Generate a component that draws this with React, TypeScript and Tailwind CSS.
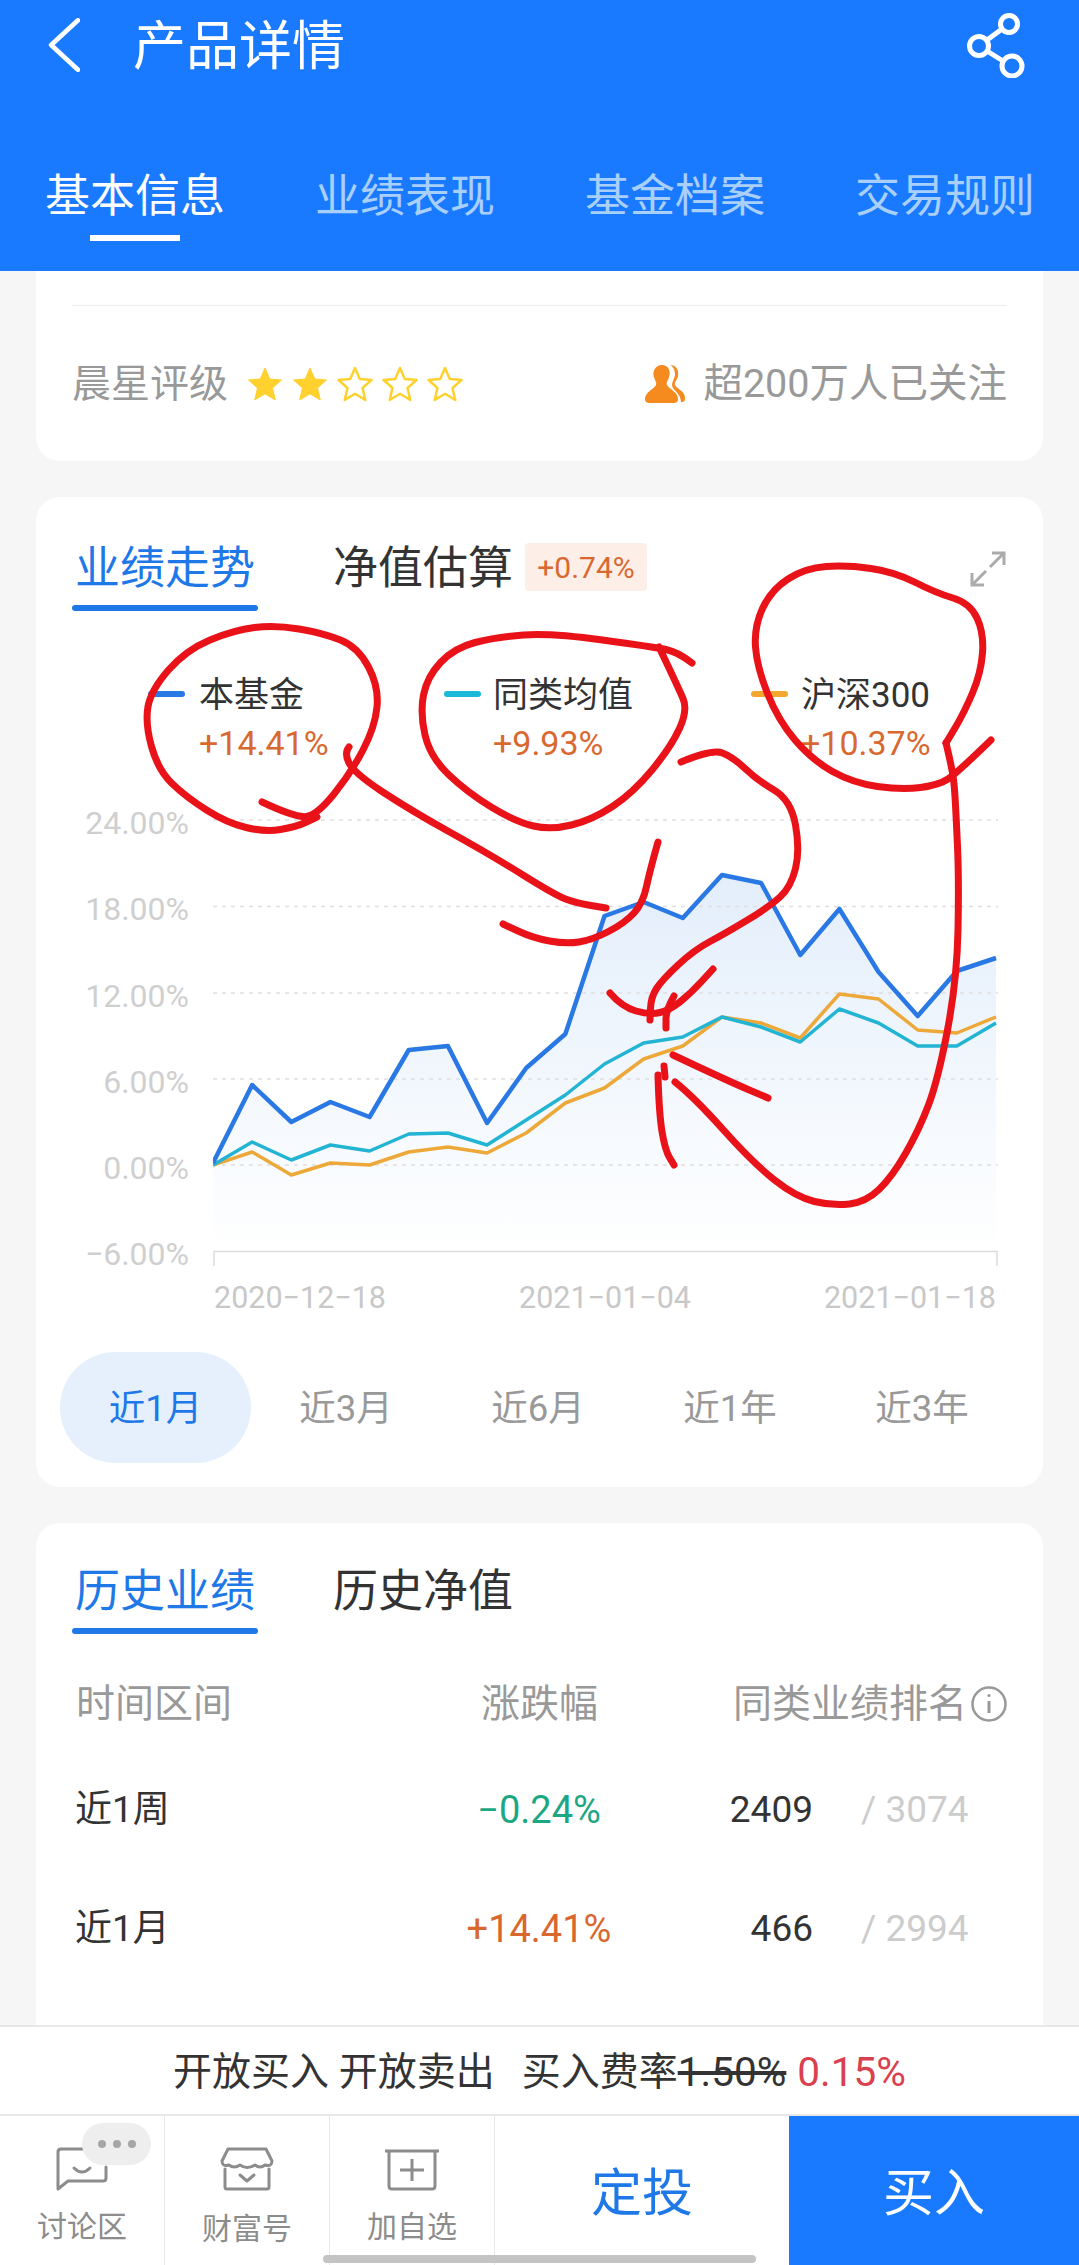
const GRID_Y = [820, 906.5, 993, 1079, 1165]
const STEP = 39.15
const toPoints = (ys: number[]) => ys.map((y, i) => `${213 + i * STEP},${y}`).join(' ')

const BLUE = [1163, 1085, 1122, 1102, 1117, 1050, 1046, 1123, 1068, 1034, 916, 902, 918, 875, 883, 955, 909, 972, 1016, 971, 958]
const CYAN = [1165, 1142, 1160, 1145, 1151, 1134, 1133, 1145, 1120, 1095, 1064, 1043, 1037, 1017, 1027, 1042, 1009, 1023, 1046, 1046, 1023]
const ORANGE = [1165, 1152, 1175, 1163, 1165, 1152, 1147, 1153, 1133, 1103, 1088, 1059, 1046, 1017, 1023, 1038, 994, 999, 1030, 1033, 1017]

const RED: number[][][] = [
  [[262, 802], [296, 818], [317, 815], [351, 773], [375, 727], [379, 687], [358, 647], [323, 633], [275, 625], [234, 630], [186, 650], [151, 690], [145, 723], [158, 770], [186, 797], [227, 823], [265, 832], [296, 827], [317, 817]],
  [[349, 747], [344, 753], [354, 773], [410, 810], [491, 855], [555, 895], [576, 903], [606, 908]],
  [[692, 663], [678, 652], [654, 647], [551, 633], [496, 637], [454, 648], [427, 677], [420, 713], [430, 757], [468, 793], [516, 822], [551, 830], [592, 820], [633, 793], [671, 747], [688, 710], [678, 687], [659, 647]],
  [[681, 762], [712, 749], [733, 757], [757, 780], [791, 800], [800, 850], [791, 887], [769, 907], [726, 933], [694, 950], [662, 980], [651, 997], [650, 1020]],
  [[658, 842], [650, 870], [643, 903], [625, 923], [592, 940], [566, 944], [533, 938], [503, 924]],
  [[610, 993], [622, 1007], [650, 1015], [670, 1010], [691, 993], [713, 969]],
  [[674, 996], [666, 1010], [666, 1028]],
  [[673, 1055], [726, 1080], [768, 1098]],
  [[664, 1066], [665, 1077]],
  [[658, 1075], [659, 1113], [665, 1150], [674, 1165]],
  [[675, 1082], [694, 1097], [753, 1163], [796, 1197], [833, 1206], [866, 1202], [892, 1177], [919, 1130], [938, 1080], [957, 980], [959, 880], [956, 813], [954, 780], [950, 760], [946, 743]],
  [[991, 740], [957, 773], [939, 785], [902, 790], [853, 783], [812, 760], [778, 720], [757, 667], [754, 627], [771, 590], [805, 568], [847, 565], [895, 572], [936, 593], [970, 603], [984, 633], [981, 673], [964, 713], [946, 743]],
]

/* smooth freehand stroke through the points */
function scribble(pts: number[][]) {
  let d = `M${pts[0][0]} ${pts[0][1]}`
  for (let i = 1; i < pts.length - 1; i++) {
    const mx = (pts[i][0] + pts[i + 1][0]) / 2
    const my = (pts[i][1] + pts[i + 1][1]) / 2
    d += ` Q${pts[i][0]} ${pts[i][1]} ${mx} ${my}`
  }
  const last = pts[pts.length - 1]
  return d + ` L${last[0]} ${last[1]}`
}

function Star({ filled }: { filled: boolean }) {
  return (
    <svg viewBox="0 0 36 36" className="h-[36px] w-[36px]">
      <path
        d="M18 2 L22.8 13 L34.5 14 L25.5 22 L28.3 34 L18 27.8 L7.7 34 L10.5 22 L1.5 14 L13.2 13 Z"
        fill={filled ? '#ffd12e' : 'none'}
        stroke="#ffd12e"
        strokeWidth={filled ? 1 : 2.5}
        strokeLinejoin="round"
      />
    </svg>
  )
}

function TabPair({ active, other, badge }: { active: string; other: string; badge?: string }) {
  return (
    <div className="flex items-start pl-[36px]">
      <div className="flex w-[186px] flex-col items-center">
        <span className="h-[60px] text-[45px] leading-[64px] text-[#1f78e8]">{active}</span>
        <span className="mt-[8px] h-[6px] w-full rounded-full bg-[#1f78e8]" />
      </div>
      <span className="ml-[75px] h-[60px] text-[45px] leading-[64px] text-[#333333]">{other}</span>
      {badge && (
        <span className="mt-[6px] ml-[12px] flex h-[48px] w-[122px] items-center justify-center rounded-[4px] bg-[#fdeee8] text-[30px] text-[#d9682f]">
          {badge}
        </span>
      )}
    </div>
  )
}

function Legend({ color, name, value, width, gap }: { color: string; name: string; value: string; width: string; gap: string }) {
  return (
    <div className={`flex items-start ${width}`}>
      <span className={`mt-[19px] h-[6px] w-[37px] rounded-full ${color}`} />
      <div className={`flex flex-col gap-[4px] ${gap}`}>
        <span className="h-[44px] text-[35px] leading-[47px] text-[#333333]">{name}</span>
        <span className="h-[44px] text-[34px] leading-[47px] text-[#d9682f]">{value}</span>
      </div>
    </div>
  )
}

function Rank({ period, change, tone, rank, total }: { period: string; change: string; tone: string; rank: string; total: string }) {
  return (
    <div className="flex h-[50px] items-center pl-[39px]">
      <span className="w-[364px] text-[37px] text-[#333333]">{period}</span>
      <span className={`w-[200px] text-center text-[38px] ${tone}`}>{change}</span>
      <span className="w-[174px] text-right text-[37px] text-[#333333]">{rank}</span>
      <span className="ml-[48px] text-[37px] text-[#cccccc]">/ {total}</span>
    </div>
  )
}

export default function App() {
  return (
    <div className="relative flex h-[2265px] w-[1079px] flex-col overflow-hidden bg-[#f6f6f6] font-['Roboto','Noto_Sans_CJK_SC',sans-serif]">
      {/* Header */}
      <header className="h-[271px] shrink-0 bg-[#1a7aff]">
        <div className="flex h-[90px] items-center pr-[54px] pl-[47px]">
          <svg viewBox="0 0 32 52" className="h-[54px] w-[33px]" fill="none" stroke="#fff" strokeWidth="4.5">
            <path d="M30 2 L4 26 L30 50" strokeLinecap="round" strokeLinejoin="round" />
          </svg>
          <h1 className="ml-[53px] pt-[4px] text-[53px] leading-none text-white">产品详情</h1>
          <svg viewBox="0 0 58 65" className="ml-auto h-[65px] w-[58px]" fill="none" stroke="#fff" strokeWidth="5">
            <circle cx="42" cy="11" r="8.5" />
            <circle cx="12" cy="33" r="9.5" />
            <circle cx="45" cy="53" r="10" />
            <path d="M35 16 L20 27 M20 38 L36 48" />
          </svg>
        </div>
        <nav className="mt-[70px] flex gap-[90px] pl-[45px]">
          {['基本信息', '业绩表现', '基金档案', '交易规则'].map((t, i) => (
            <div key={t} className="flex flex-col items-center">
              <span className={`h-[70px] text-[45px] leading-[74px] ${i === 0 ? 'text-white' : 'text-[#a9cffb]'}`}>{t}</span>
              {i === 0 && <span className="mt-[5px] h-[6px] w-[90px] bg-white" />}
            </div>
          ))}
        </nav>
      </header>

      {/* Scrolling content */}
      <main className="flex h-[1754px] shrink-0 flex-col gap-[36px] overflow-hidden px-[36px]">
        <section className="h-[190px] shrink-0 rounded-b-[24px] bg-white px-[36px] pt-[34px]">
          <div className="h-px bg-[#ececec]" />
          <div className="mt-[53px] flex h-[50px] items-center">
            <span className="text-[39px] text-[#999999]">晨星评级</span>
            <div className="ml-[19px] flex gap-[9px]">
              {[true, true, false, false, false].map((f, i) => (
                <Star key={i} filled={f} />
              ))}
            </div>
            <svg viewBox="0 0 40 40" className="ml-auto h-[40px] w-[40px]" fill="#f58a1f">
              <path d="M17 1 C24 1 26 8 24 13 C23 17 21 18 22 21 C24 25 33 28 33 35 C33 38 31 39 29 39 L5 39 C2 39 0 38 0 35 C0 28 9 25 11 21 C12 18 10 17 9 13 C7 8 10 1 17 1 Z" />
              <path d="M25 1 C32 1 34 7 33 12 C32 17 29 18 30 21 C32 25 40 27 40 34 C40 37 39 38 37 38 L36 38 C36 29 27 26 27 21 C27 18 29 16 30 11 C30 7 29 3 25 1 Z" />
            </svg>
            <span className="ml-[18px] text-[39.5px] text-[#999999]">超200万人已关注</span>
          </div>
        </section>

        {/* Trend card */}
        <section className="relative h-[990px] shrink-0 rounded-[24px] bg-white pt-[40px]">
          <TabPair active="业绩走势" other="净值估算" badge="+0.74%" />
          <svg viewBox="0 0 36 36" className="absolute top-[54px] right-[37px] h-[36px] w-[36px]" fill="none" stroke="#ababab" strokeWidth="3">
            <path d="M22 2 L34 2 L34 14 M34 2 L20 16 M2 22 L2 34 L14 34 M2 34 L16 20" />
          </svg>

          <div className="mt-[61px] flex pl-[112px]">
            <Legend color="bg-[#2a78e4]" name="本基金" value="+14.41%" width="w-[296px]" gap="ml-[14px]" />
            <Legend color="bg-[#1cb8d8]" name="同类均值" value="+9.93%" width="w-[307px]" gap="ml-[12px]" />
            <Legend color="bg-[#f2a72e]" name="沪深300" value="+10.37%" width="w-[230px]" gap="ml-[13px]" />
          </div>

          <div className="mt-[13px] flex h-[493px] items-start">
            <div className="flex w-[177px] flex-col pl-[48px]">
              {['24.00%', '18.00%', '12.00%', '6.00%', '0.00%', '−6.00%'].map(l => (
                <span key={l} className="h-[86.3px] w-[129px] pr-[24px] text-right text-[32px] leading-[92px] text-[#cfcfcf]">
                  {l}
                </span>
              ))}
            </div>
            <svg viewBox="213 777 785 493" className="h-[493px] w-[785px]" fill="none">
              <defs>
                <linearGradient id="area" x1="0" y1="875" x2="0" y2="1252" gradientUnits="userSpaceOnUse">
                  <stop offset="0" stopColor="#e3eefb" />
                  <stop offset="1" stopColor="#ffffff" />
                </linearGradient>
              </defs>
              <polygon points={`213,1252 ${toPoints(BLUE)} 996,1252`} fill="url(#area)" />
              {GRID_Y.map(y => (
                <line key={y} x1="213" x2="998" y1={y} y2={y} stroke="#dedede" strokeWidth="1.5" strokeDasharray="4 5" />
              ))}
              <path d="M214 1266 V1251.5 H997 V1266" stroke="#dcdcdc" strokeWidth="1.5" />
              <polyline points={toPoints(ORANGE)} stroke="#eda83a" strokeWidth="3.5" strokeLinejoin="round" />
              <polyline points={toPoints(CYAN)} stroke="#22b4d2" strokeWidth="3.5" strokeLinejoin="round" />
              <polyline points={toPoints(BLUE)} stroke="#2a78e4" strokeWidth="4.5" strokeLinejoin="round" />
            </svg>
          </div>

          <div className="mt-[8px] flex h-[40px] items-center justify-between pr-[47px] pl-[178px] text-[30.5px] text-[#c8c8c8]">
            <span>2020−12−18</span>
            <span>2021−01−04</span>
            <span>2021−01−18</span>
          </div>

          <div className="mt-[34px] flex pl-[24px]">
            {['近1月', '近3月', '近6月', '近1年', '近3年'].map((t, i) => (
              <span
                key={t}
                className={
                  i === 0
                    ? 'mr-[-1px] flex h-[111px] w-[191px] items-center justify-center rounded-full bg-[#e6f0fd] pt-[4px] text-[36.5px] text-[#1f78e8]'
                    : 'flex h-[111px] w-[192px] items-center justify-center pt-[4px] text-[36.5px] text-[#999999]'
                }
              >
                {t}
              </span>
            ))}
          </div>
        </section>

        {/* History card */}
        <section className="h-[600px] shrink-0 rounded-[24px] bg-white pt-[37px]">
          <TabPair active="历史业绩" other="历史净值" />
          <div className="mt-[45px] flex h-[50px] items-center pl-[40px] text-[39px] text-[#999999]">
            <span className="w-[367px]">时间区间</span>
            <span className="w-[193px] text-center">涨跌幅</span>
            <span className="ml-[97px] whitespace-nowrap">同类业绩排名</span>
            <svg viewBox="0 0 38 38" className="ml-[3px] h-[38px] w-[38px]" fill="none" stroke="#999999" strokeWidth="2.5">
              <circle cx="19" cy="19" r="16.5" />
              <path d="M19 16 V28" strokeWidth="3" />
              <circle cx="19" cy="10.5" r="1.6" fill="#999999" stroke="none" />
            </svg>
          </div>
          <div className="mt-[56px] flex flex-col gap-[69px]">
            <Rank period="近1周" change="−0.24%" tone="text-[#1ba784]" rank="2409" total="3074" />
            <Rank period="近1月" change="+14.41%" tone="text-[#d9682f]" rank="466" total="2994" />
          </div>
        </section>
      </main>

      {/* Fee line */}
      <div className="flex h-[91px] shrink-0 items-center justify-center border-y-2 border-[#e8e8e8] bg-white pt-[4px] text-[39px] whitespace-nowrap text-[#333333]">
        <span>开放买入 开放卖出</span>
        <span className="ml-[27px]">买入费率</span>
        <span className="text-[40.5px] line-through">1.50%</span>
        <span className="ml-[11px] text-[40.5px] text-[#d9414f]">0.15%</span>
      </div>

      {/* Action bar */}
      <footer className="relative flex min-h-0 flex-1 bg-white">
        <div className="flex w-[165px] flex-col items-center border-r border-[#e8e8e8] pt-[31px]">
          <svg viewBox="0 0 52 44" className="h-[44px] w-[52px]" fill="none" stroke="#8c8c8c" strokeWidth="3" strokeLinecap="round" strokeLinejoin="round">
            <path d="M30 2 H5 Q2 2 2 5 V42 L12 34 H47 Q50 34 50 31 V20" />
            <path d="M18 21 Q26 29 34 21" />
          </svg>
          <span className="mt-[16px] text-[30px] leading-[40px] text-[#8c8c8c]">讨论区</span>
        </div>
        <div className="flex w-[165px] flex-col items-center border-r border-[#e8e8e8] pt-[31px]">
          <svg viewBox="0 0 54 44" className="h-[44px] w-[54px]" fill="none" stroke="#8c8c8c" strokeWidth="3" strokeLinecap="round" strokeLinejoin="round">
            <path d="M8 2 H46 L52 14 Q52 20 45 18 Q40 22 35 18 Q27 23 20 18 Q14 22 9 18 Q2 20 2 14 Z" />
            <path d="M5 22 V40 Q5 42 7 42 H47 Q49 42 49 40 V22" />
            <path d="M20 28 L27 34 L34 28" />
          </svg>
          <span className="mt-[18px] text-[30px] leading-[40px] text-[#8c8c8c]">财富号</span>
        </div>
        <div className="flex w-[165px] flex-col items-center border-r border-[#e8e8e8] pt-[33px]">
          <svg viewBox="0 0 54 42" className="h-[42px] w-[54px]" fill="none" stroke="#8c8c8c" strokeWidth="3" strokeLinejoin="round">
            <path d="M0 2 H54" />
            <path d="M4 2 V37 Q4 40 7 40 H47 Q50 40 50 37 V2" />
            <path d="M27 10 V32 M15 21 H39" />
          </svg>
          <span className="mt-[16px] text-[30px] leading-[40px] text-[#8c8c8c]">加自选</span>
        </div>
        <div className="flex w-[294px] items-start justify-center pt-[48px] text-[51px] leading-[60px] text-[#1f78e8]">定投</div>
        <div className="flex flex-1 items-start justify-center bg-[#1a7aff] pt-[48px] text-[51px] leading-[60px] text-white">买入</div>

        <div className="absolute top-[7px] left-[82px] flex h-[42px] w-[69px] items-center justify-center gap-[7px] rounded-full bg-[#eeeeee]">
          <span className="h-[8px] w-[8px] rounded-full bg-[#a6a6a6]" />
          <span className="h-[8px] w-[8px] rounded-full bg-[#a6a6a6]" />
          <span className="h-[8px] w-[8px] rounded-full bg-[#a6a6a6]" />
        </div>
        <div className="absolute bottom-[2px] left-[323px] h-[8px] w-[433px] rounded-full bg-[#c4c4c4]" />
      </footer>

      {/* Hand-drawn red marks over the chart */}
      <svg viewBox="0 0 1079 2265" className="pointer-events-none absolute inset-0 h-[2265px] w-[1079px]" fill="none" stroke="#ea1219" strokeWidth="7" strokeLinecap="round" strokeLinejoin="round">
        {RED.map((pts, i) => (
          <path key={i} d={scribble(pts)} />
        ))}
      </svg>
    </div>
  )
}
